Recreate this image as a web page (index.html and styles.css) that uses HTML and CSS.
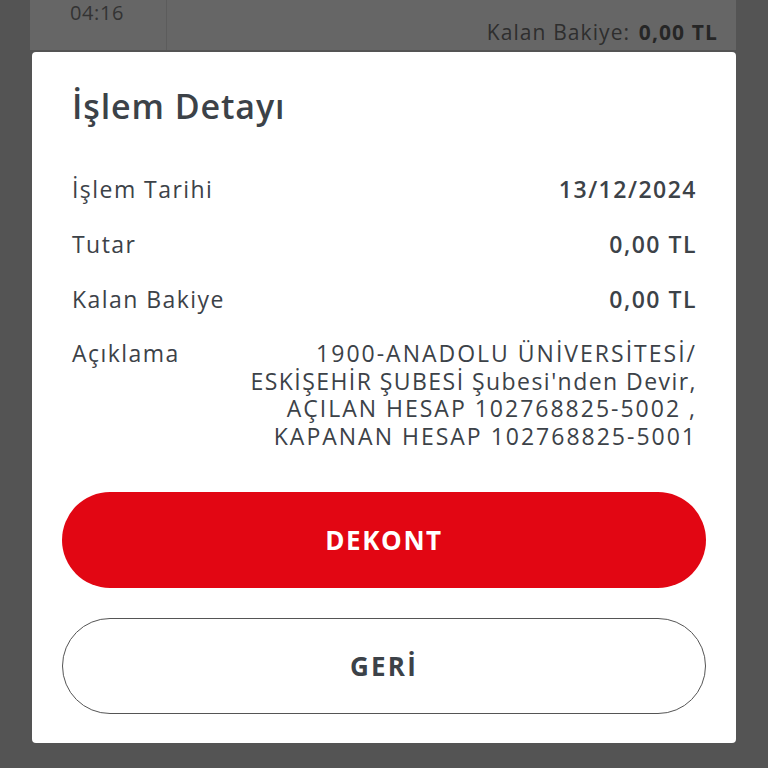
FILE: index.html
```html
<!DOCTYPE html>
<html lang="tr">
<head>
<meta charset="utf-8">
<link rel="stylesheet" href="styles.css">
</head>
<body>
<div class="page">
  <div class="bg-card">
    <div class="bg-time">04:16</div>
    <div class="bg-main">
      <div class="bg-balance">Kalan Bakiye: <b>0,00 TL</b></div>
    </div>
  </div>
  <div class="bg-bottom"></div>
</div>
<div class="overlay">
  <div class="dialog">
    <h1 class="title">İşlem Detayı</h1>
    <div class="rows">
      <div class="row"><span class="label">İşlem Tarihi</span><span class="value">13/12/2024</span></div>
      <div class="row"><span class="label">Tutar</span><span class="value">0,00 TL</span></div>
      <div class="row"><span class="label">Kalan Bakiye</span><span class="value">0,00 TL</span></div>
      <div class="row desc"><span class="label">Açıklama</span><span class="desc-text"><span class="line wide">1900-ANADOLU ÜNİVERSİTESİ/</span><span class="line">ESKİŞEHİR ŞUBESİ Şubesi'nden Devir,</span><span class="line wide">AÇILAN HESAP 102768825-5002 ,</span><span class="line wide">KAPANAN HESAP 102768825-5001</span></span></div>
    </div>
    <div class="actions">
      <button class="btn btn-primary">DEKONT</button>
      <button class="btn btn-secondary">GERİ</button>
    </div>
  </div>
</div>
</body>
</html>
```
FILE: styles.css
```css
* { box-sizing: border-box; }
html, body { margin: 0; padding: 0; }
body {
  width: 768px;
  height: 768px;
  overflow: hidden;
  background: #545454;
  font-family: "Open Sans", "Noto Sans", sans-serif;
  position: relative;
}
.page {
  display: flex;
  flex-direction: column;
  height: 768px;
  padding: 0 32px 0 30px;
}
.bg-card {
  display: flex;
  height: 50px;
  background: #666666;
}
.bg-time {
  width: 137px;
  border-right: 1px solid #5c5c5c;
  color: #333;
  font-size: 20px;
  letter-spacing: 0.6px;
  padding: 0 0 0 40px;
  line-height: 26px;
}
.bg-main {
  flex: 1;
  display: flex;
  justify-content: flex-end;
  align-items: flex-end;
  padding: 0 18px 4px 0;
}
.bg-balance {
  color: #2e2e2e;
  font-size: 21px;
  letter-spacing: 1.1px;
}
.bg-balance b { color: #262626; font-weight: 700; margin-left: 2px; }
.bg-bottom { flex: 1; }

.overlay {
  position: absolute;
  left: 32px;
  top: 52px;
  width: 704px;
}
.dialog {
  background: #fff;
  border-radius: 4px;
  padding: 28px 30px 29px 30px;
  color: #3c4248;
}
.title {
  margin: 0 10px;
  font-size: 34px;
  font-weight: 600;
  line-height: 52px;
  letter-spacing: 0.9px;
}
.rows {
  margin: 42px 10px 0 10px;
  display: flex;
  flex-direction: column;
  gap: 25px;
}
.row {
  display: flex;
  justify-content: space-between;
  align-items: flex-start;
  font-size: 23px;
  letter-spacing: 1.45px;
  line-height: 30px;
}
.label { font-weight: 400; }
.value { font-weight: 600; letter-spacing: 1.5px; margin-right: -1px; }
.desc { line-height: 27.7px; padding-top: 1px; }
.desc-text {
  display: flex;
  flex-direction: column;
  align-items: flex-end;
  font-weight: 400;
  margin-right: -1px;
}
.line.wide { letter-spacing: 2.0px; }
.actions {
  margin-top: 41px;
  display: flex;
  flex-direction: column;
  gap: 30px;
}
.btn {
  height: 96px;
  border-radius: 48px;
  font-family: "Open Sans", "Noto Sans", sans-serif;
  font-size: 26px;
  font-weight: 700;
  letter-spacing: 1.6px;
  cursor: pointer;
}
.btn-primary {
  background: #e20613;
  color: #fff;
  border: none;
}
.btn-secondary {
  background: #fff;
  color: #3c4248;
  border: 1px solid #555;
  letter-spacing: 2.2px;
}
```
